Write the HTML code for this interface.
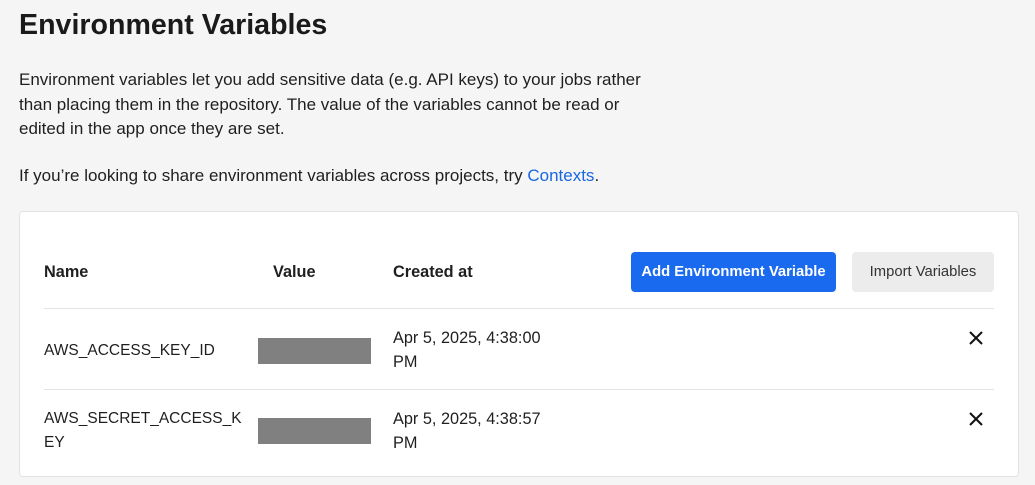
<!DOCTYPE html><html><head><style>
body{margin:0;width:1035px;height:485px;background:#f5f5f5;font-family:"Liberation Sans",sans-serif;color:#1f1f1f;position:relative;overflow:hidden}
.a{position:absolute;white-space:nowrap}
h1{position:absolute;left:19px;top:9px;margin:0;font-size:28.6px;font-weight:bold;color:#1a1a1a}
.p{font-size:17px;line-height:24.5px;left:19px}
.card{position:absolute;left:19px;top:211px;width:998px;height:264px;background:#fff;border:1px solid #e2e2e2;border-radius:4px}
.h{font-weight:bold;font-size:16.3px}
.t{font-size:16.3px;line-height:24px}
.n{font-size:15.5px;line-height:24px}
.line{position:absolute;left:44px;width:950px;height:1px;background:#e3e3e3}
.mask{position:absolute;left:258px;width:113px;height:26px;background:#808080}
.btn{position:absolute;top:252px;height:40px;border-radius:4px;font-size:14.8px;display:flex;align-items:center;justify-content:center}
</style></head><body>
<h1>Environment Variables</h1>
<div class="a p" style="top:68px">Environment variables let you add sensitive data (e.g. API keys) to your jobs rather<br>than placing them in the repository. The value of the variables cannot be read or<br>edited in the app once they are set.</div>
<div class="a p" style="top:164px">If you’re looking to share environment variables across projects, try <span style="color:#1a66e0">Contexts</span>.</div>
<div class="card"></div>
<div class="a h" style="left:44px;top:263px">Name</div>
<div class="a h" style="left:273px;top:263px">Value</div>
<div class="a h" style="left:393px;top:263px">Created at</div>
<div class="btn" style="left:631px;width:205px;background:#1a6af0;color:#fff;font-weight:bold">Add Environment Variable</div>
<div class="btn" style="left:852px;width:142px;background:#ececec;color:#333">Import Variables</div>
<div class="line" style="top:308px"></div>
<div class="line" style="top:389px"></div>
<div class="a n" style="left:44px;top:339px">AWS_ACCESS_KEY_ID</div>
<div class="mask" style="top:338px"></div>
<div class="a t" style="left:393px;top:326px">Apr 5, 2025, 4:38:00<br>PM</div>
<div class="a n" style="left:44px;top:407px">AWS_SECRET_ACCESS_K<br>EY</div>
<div class="mask" style="top:418px"></div>
<div class="a t" style="left:393px;top:407px">Apr 5, 2025, 4:38:57<br>PM</div>
<svg class="a" style="left:969px;top:331px" width="14" height="14"><path d="M1 1L13 13M13 1L1 13" stroke="#111" stroke-width="2"/></svg>
<svg class="a" style="left:969px;top:412px" width="14" height="14"><path d="M1 1L13 13M13 1L1 13" stroke="#111" stroke-width="2"/></svg>
</body></html>
